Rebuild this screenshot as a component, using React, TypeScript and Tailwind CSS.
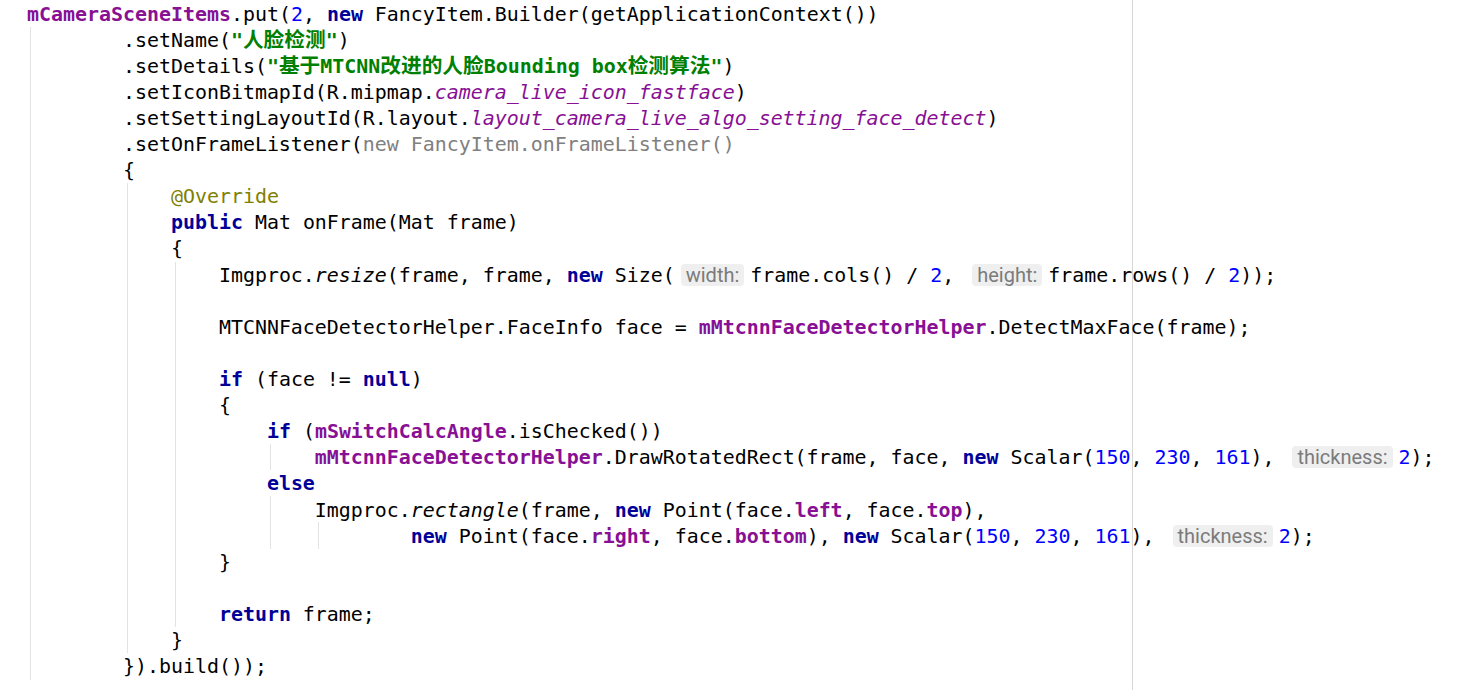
import type { ReactNode } from "react";

// small token helpers, IntelliJ light scheme
const K = ({ children }: { children: ReactNode }) => (
  <span className="font-bold text-[#000099]">{children}</span>
);
const F = ({ children }: { children: ReactNode }) => (
  <span className="font-bold text-[#871094]">{children}</span>
);
const S = ({ children }: { children: ReactNode }) => (
  <span className="font-bold text-[#008000]">{children}</span>
);
const N = ({ children }: { children: ReactNode }) => (
  <span className="text-[#0000ff]">{children}</span>
);
const I = ({ children }: { children: ReactNode }) => (
  <span className="italic">{children}</span>
);
const IF = ({ children }: { children: ReactNode }) => (
  <span className="italic text-[#871094]">{children}</span>
);
const G = ({ children }: { children: ReactNode }) => (
  <span className="text-[#808080]">{children}</span>
);
const A = ({ children }: { children: ReactNode }) => (
  <span className="text-[#808000]">{children}</span>
);
const CJK = ({ children }: { children: ReactNode }) => (
  <span className="text-[20.7px] leading-none font-['Noto_Sans_CJK_SC',sans-serif]">{children}</span>
);
// parameter name hint
const H = ({ children }: { children: ReactNode }) => (
  <span className="mx-[6px] inline-block rounded-[4px] bg-[#efefef] px-[5px] align-baseline font-['Roboto',sans-serif] text-[20px] leading-[22px] font-normal not-italic text-[#7b7b7b]">
    {children}
  </span>
);

const lines: ReactNode[] = [
  <>
    <F>mCameraSceneItems</F>.put(<N>2</N>, <K>new</K> FancyItem.Builder(getApplicationContext())
  </>,
  <>
    {"        "}.setName(<S>"<CJK>人脸检测</CJK>"</S>)
  </>,
  <>
    {"        "}.setDetails(<S>"<CJK>基于</CJK>MTCNN<CJK>改进的人脸</CJK>Bounding box<CJK>检测算法</CJK>"</S>)
  </>,
  <>
    {"        "}.setIconBitmapId(R.mipmap.<IF>camera_live_icon_fastface</IF>)
  </>,
  <>
    {"        "}.setSettingLayoutId(R.layout.<IF>layout_camera_live_algo_setting_face_detect</IF>)
  </>,
  <>
    {"        "}.setOnFrameListener(<G>new FancyItem.onFrameListener()</G>
  </>,
  <>{"        {"}</>,
  <>
    {"            "}<A>@Override</A>
  </>,
  <>
    {"            "}<K>public</K> Mat onFrame(Mat frame)
  </>,
  <>{"            {"}</>,
  <>
    {"                "}Imgproc.<I>resize</I>(frame, frame, <K>new</K> Size(<H>width:</H>frame.cols() / <N>2</N>,{" "}
    <H>height:</H>frame.rows() / <N>2</N>));
  </>,
  <></>,
  <>
    {"                "}MTCNNFaceDetectorHelper.FaceInfo face = <F>mMtcnnFaceDetectorHelper</F>.DetectMaxFace(frame);
  </>,
  <></>,
  <>
    {"                "}<K>if</K> (face != <K>null</K>)
  </>,
  <>{"                {"}</>,
  <>
    {"                    "}<K>if</K> (<F>mSwitchCalcAngle</F>.isChecked())
  </>,
  <>
    {"                        "}<F>mMtcnnFaceDetectorHelper</F>.DrawRotatedRect(frame, face, <K>new</K> Scalar(<N>150</N>,{" "}
    <N>230</N>, <N>161</N>),{" "}<H>thickness:</H><N>2</N>);
  </>,
  <>
    {"                    "}<K>else</K>
  </>,
  <>
    {"                        "}Imgproc.<I>rectangle</I>(frame, <K>new</K> Point(face.<F>left</F>, face.<F>top</F>),
  </>,
  <>
    {"                                "}<K>new</K> Point(face.<F>right</F>, face.<F>bottom</F>), <K>new</K> Scalar(<N>150</N>,{" "}
    <N>230</N>, <N>161</N>),{" "}<H>thickness:</H><N>2</N>);
  </>,
  <>{"                }"}</>,
  <></>,
  <>
    {"                "}<K>return</K> frame;
  </>,
  <>{"            }"}</>,
  <>{"        }).build());"}</>,
];

// indent guides: [x, top, bottom]
const guides: [number, number, number][] = [
  [30, 27, 680],
  [127, 183, 653],
  [175, 262, 627],
  [270, 444, 470],
  [270, 496, 549],
  [318, 522, 549],
];

export default function App() {
  return (
    <main className="relative h-[690px] w-[1461px] overflow-hidden bg-white">
      {guides.map(([x, t, b], i) => (
        <div
          key={i}
          className="absolute w-px bg-[#e3e3e3]"
          style={{ left: x, top: t, height: b - t }}
        />
      ))}
      <div className="absolute top-0 left-[1132px] h-full w-px bg-[#d6d6d6]" />

      <div className="relative flex flex-col pl-[27px] mt-[1.5px] font-['DejaVu_Sans_Mono','Noto_Sans_CJK_SC',monospace] text-[19.93px] text-black">
        {lines.map((l, i) => (
          <div key={i} className="h-[26.12px] leading-[26.12px] whitespace-pre">
            {l}
          </div>
        ))}
      </div>
    </main>
  );
}
